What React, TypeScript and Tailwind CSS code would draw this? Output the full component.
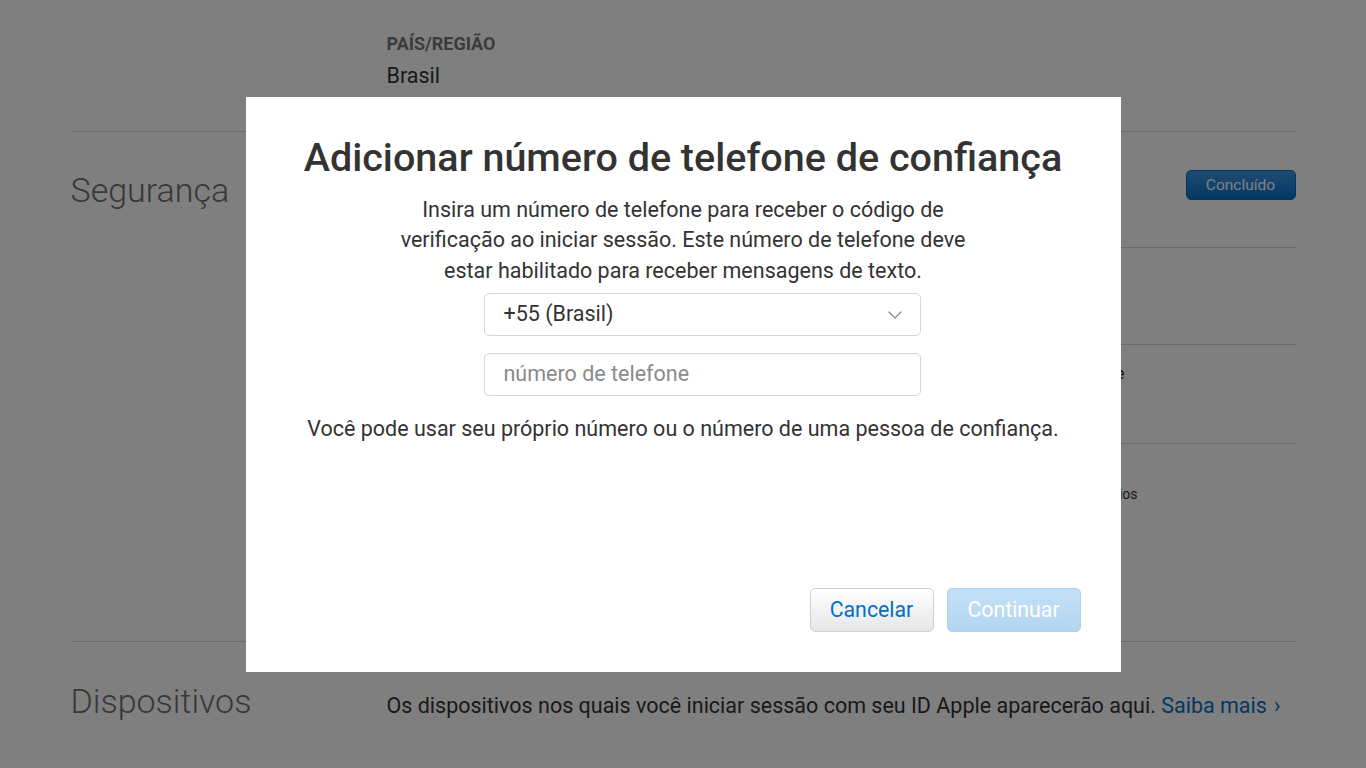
import React from 'react';

const font = { fontFamily: 'Roboto, "Liberation Sans", Arial, sans-serif' };

function ChevronDown() {
  return (
    <svg width="14" height="8" viewBox="0 0 14 8" fill="none" className="text-[#8a8a8a]">
      <path d="M1 1l6 6 6-6" stroke="currentColor" strokeWidth="1.2" strokeLinecap="round" strokeLinejoin="round" />
    </svg>
  );
}

function BackgroundPage() {
  return (
    <div className="w-[1225px] mx-auto text-[#333]">
      <div className="pl-[316px] pt-[33px] pb-[40px]">
        <p className="text-[18px] leading-[22px] font-bold text-[#777] uppercase">País/Região</p>
        <p className="mt-[6px] text-[21.5px] leading-[30px]">Brasil</p>
      </div>

      <div className="flex border-t border-[#d6d6d6]">
        <div className="w-[316px] pt-[38px]">
          <h2 className="text-[34px] leading-[40px] font-light text-[#707070]">Segurança</h2>
        </div>
        <div className="flex-1 flex flex-col">
          <div className="h-[115px] pt-[38px] flex justify-end">
            <button className="w-[110px] h-[30px] pt-[1px] rounded-[5px] border border-[#0b6ab8] bg-gradient-to-b from-[#3c98e4] to-[#0070c9] text-white text-[15.5px]">
              Concluído
            </button>
          </div>
          <div className="h-[97px] border-t border-[#d6d6d6]"></div>
          <div className="h-[99px] border-t border-[#d6d6d6] pt-[17px]">
            <div className="w-[738px] text-right text-[17px] leading-[22px] whitespace-nowrap">
              recuperar sua conta e
            </div>
          </div>
          <div className="h-[198px] border-t border-[#d6d6d6] pt-[40px]">
            <div className="w-[751px] text-right text-[14px] leading-[20px] whitespace-nowrap">
              e-mails e usuários
            </div>
          </div>
        </div>
      </div>

      <div className="flex border-t border-[#d6d6d6] pt-[39px] h-[126px]">
        <div className="w-[316px]">
          <h2 className="text-[34px] leading-[40px] font-light text-[#707070]">Dispositivos</h2>
        </div>
        <p className="mt-[10px] text-[21.5px] leading-[30px]">
          Os dispositivos nos quais você iniciar sessão com seu ID Apple aparecerão aqui.{' '}
          <span className="text-[#0070c9]">
            Saiba mais<span className="ml-[7px]">›</span>
          </span>
        </p>
      </div>
    </div>
  );
}

function AddPhoneModal() {
  return (
    <div className="w-[875px] h-[575px] bg-white flex flex-col items-center px-[40px] pt-[38px] pb-[40px]">
      <h1 className="text-[39.5px] leading-[46px] font-medium text-[#333] whitespace-nowrap">
        Adicionar número de telefone de confiança
      </h1>
      <p className="mt-[14px] text-[21.5px] leading-[30.5px] text-[#333] text-center whitespace-nowrap">
        Insira um número de telefone para receber o código de
        <br />
        verificação ao iniciar sessão. Este número de telefone deve
        <br />
        estar habilitado para receber mensagens de texto.
      </p>
      <div className="mt-[7px] ml-[38px] w-[437px] h-[43px] border border-[#d6d6d6] rounded-[5px] flex items-center justify-between pl-[19px] pr-[18px]">
        <span className="text-[21.5px] text-[#333]">+55 (Brasil)</span>
        <ChevronDown />
      </div>
      <div className="mt-[17px] ml-[38px] w-[437px] h-[43px] border border-[#d6d6d6] rounded-[5px] flex items-center pl-[19px]">
        <span className="text-[21.5px] text-[#8a8a8a]">número de telefone</span>
      </div>
      <p className="mt-[18px] text-[21.5px] leading-[30px] text-[#333] whitespace-nowrap">
        Você pode usar seu próprio número ou o número de uma pessoa de confiança.
      </p>
      <div className="flex-1" />
      <div className="self-end flex gap-[13px]">
        <button className="w-[124px] h-[44px] rounded-[5px] border border-[#d0d0d0] bg-gradient-to-b from-white to-[#e6e6e6] text-[21.3px] text-[#0070c9]">
          Cancelar
        </button>
        <button className="w-[134px] h-[44px] rounded-[5px] border border-[#acd2f0] bg-gradient-to-b from-[#c4e0f6] to-[#b2d5f1] text-[21.3px] text-white">
          Continuar
        </button>
      </div>
    </div>
  );
}

export default function App() {
  return (
    <div className="relative w-full h-[768px] overflow-hidden bg-white" style={font}>
      <BackgroundPage />
      <div className="absolute inset-0 bg-black/50 flex items-center justify-center">
        <AddPhoneModal />
      </div>
    </div>
  );
}
